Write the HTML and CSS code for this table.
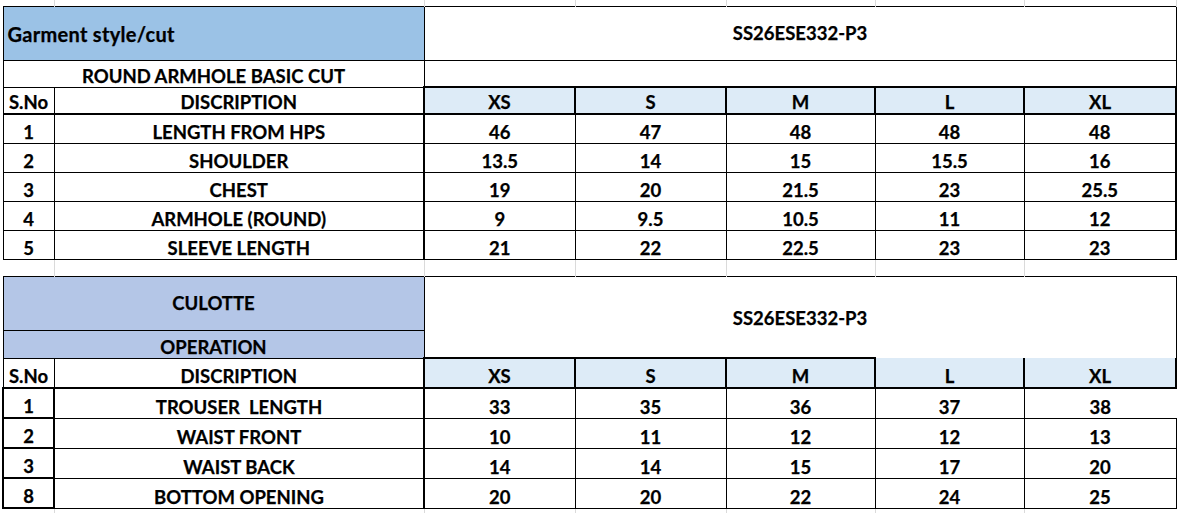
FILE: index.html
```html
<!DOCTYPE html>
<html lang="en">
<head>
<meta charset="utf-8">
<title>Size Spec</title>
<link rel="stylesheet" href="styles.css">
</head>
<body>
<table class="sheet">
  <colgroup>
    <col class="c-sno">
    <col class="c-desc">
    <col class="c-xs">
    <col class="c-s">
    <col class="c-m">
    <col class="c-l">
    <col class="c-xl">
  </colgroup>
  <tbody>
    <tr class="strip top-strip">
      <td></td><td></td><td></td><td></td><td></td><td></td><td></td>
    </tr>

    <tr class="r-big">
      <td colspan="2" class="thin fill-a left mid title">Garment style/cut</td>
      <td colspan="5" class="thin mid">SS26ESE332-P3</td>
    </tr>
    <tr class="r-sub">
      <td colspan="2" class="thin">ROUND ARMHOLE BASIC CUT</td>
      <td colspan="5" class="thin"></td>
    </tr>
    <tr class="r-head">
      <td class="thin hb">S.No</td>
      <td class="thin hb">DISCRIPTION</td>
      <td class="size-h">XS</td>
      <td class="size-h">S</td>
      <td class="size-h">M</td>
      <td class="size-h">L</td>
      <td class="size-h">XL</td>
    </tr>
    <tr class="r-data">
      <td class="thin">1</td><td class="thin desc">LENGTH FROM HPS</td>
      <td class="thin">46</td><td class="thin">47</td><td class="thin">48</td><td class="thin">48</td><td class="thin xl">48</td>
    </tr>
    <tr class="r-data">
      <td class="thin">2</td><td class="thin desc">SHOULDER</td>
      <td class="thin">13.5</td><td class="thin">14</td><td class="thin">15</td><td class="thin">15.5</td><td class="thin xl">16</td>
    </tr>
    <tr class="r-data">
      <td class="thin">3</td><td class="thin desc">CHEST</td>
      <td class="thin">19</td><td class="thin">20</td><td class="thin">21.5</td><td class="thin">23</td><td class="thin xl">25.5</td>
    </tr>
    <tr class="r-data">
      <td class="thin">4</td><td class="thin desc">ARMHOLE (ROUND)</td>
      <td class="thin">9</td><td class="thin">9.5</td><td class="thin">10.5</td><td class="thin">11</td><td class="thin xl">12</td>
    </tr>
    <tr class="r-data">
      <td class="thin">5</td><td class="thin desc">SLEEVE LENGTH</td>
      <td class="thin">21</td><td class="thin">22</td><td class="thin">22.5</td><td class="thin">23</td><td class="thin xl">23</td>
    </tr>

    <tr class="strip gap-strip">
      <td></td><td></td><td></td><td></td><td></td><td></td><td class="last"></td>
    </tr>

    <tr class="r-big">
      <td colspan="2" class="thin fill-b mid">CULOTTE</td>
      <td colspan="5" rowspan="2" class="thin nob mid code2">SS26ESE332-P3</td>
    </tr>
    <tr class="r-op">
      <td colspan="2" class="thin fill-b">OPERATION</td>
    </tr>
    <tr class="r-head2">
      <td class="thin hb">S.No</td>
      <td class="thin hb">DISCRIPTION</td>
      <td class="size-h">XS</td>
      <td class="size-h">S</td>
      <td class="size-h">M</td>
      <td class="size-h notop">L</td>
      <td class="size-h notop">XL</td>
    </tr>
    <tr class="r-data2">
      <td class="sno2">1</td><td class="thin desc">TROUSER&nbsp; LENGTH</td>
      <td class="thin">33</td><td class="thin">35</td><td class="thin">36</td><td class="thin">37</td><td class="thin noright">38</td>
    </tr>
    <tr class="r-data2">
      <td class="sno2">2</td><td class="thin desc">WAIST FRONT</td>
      <td class="thin">10</td><td class="thin">11</td><td class="thin">12</td><td class="thin">12</td><td class="thin">13</td>
    </tr>
    <tr class="r-data2">
      <td class="sno2">3</td><td class="thin desc">WAIST BACK</td>
      <td class="thin">14</td><td class="thin">14</td><td class="thin">15</td><td class="thin">17</td><td class="thin">20</td>
    </tr>
    <tr class="r-data2">
      <td class="sno2">8</td><td class="thin desc">BOTTOM OPENING</td>
      <td class="thin">20</td><td class="thin">20</td><td class="thin">22</td><td class="thin">24</td><td class="thin">25</td>
    </tr>

    <tr class="strip bottom-strip">
      <td></td><td></td><td></td><td></td><td></td><td></td><td class="last"></td>
    </tr>
  </tbody>
</table>
</body>
</html>
```

FILE: styles.css
```css
html, body {
  margin: 0;
  padding: 0;
  background: #ffffff;
}

body {
  padding-left: 2px;
  font-family: "Lato", "Carlito", "Liberation Sans", sans-serif;
  font-weight: 700;
  color: #000000;
}

.sheet {
  border-collapse: collapse;
  table-layout: fixed;
  width: 1173px;
  font-size: 18.5px;
  line-height: 22px;
  -webkit-text-stroke: 0.25px #000000;
}

.c-sno { width: 51px; }
.c-desc { width: 370px; }
.c-xs { width: 151px; }
.c-s { width: 151px; }
.c-m { width: 149px; }
.c-l { width: 149px; }
.c-xl { width: 152px; }

.sheet td {
  padding: 0 2px 0;
  text-align: center;
  vertical-align: bottom;
  white-space: nowrap;
  overflow: hidden;
}

/* spreadsheet gridline strips */
.strip td {
  border-right: 1px solid #dadada;
  padding: 0;
}
.strip td.last {
  border-right: none;
}
.top-strip { height: 6px; }
.gap-strip { height: 17px; }
.bottom-strip { height: 5px; }

/* row heights */
.r-big { height: 54px; }
.r-sub { height: 27px; }
.r-head { height: 27px; }
.r-data { height: 29px; }
.r-op { height: 28px; }
.r-head2 { height: 30px; }
.r-data2 { height: 30px; }

/* borders */
.thin { border: 1px solid #000000; }
.hb { border-bottom: 2px solid #000000; }
.desc { border-right: 2px solid #000000; }
.xl { border-right: 2px solid #000000; }
.nob { border-bottom: none; }
.noright { border-right: none; }

.size-h {
  background: #ddebf7;
  border: 2px solid #000000;
}
.size-h.notop { border-top: none; }

.sno2 {
  border: 2px solid #000000;
}

/* fills */
.fill-a { background: #9bc2e6; }
.fill-b { background: #b4c6e7; }

.sheet td.left {
  text-align: left;
  padding-left: 4px;
}
.sheet td.title {
  font-size: 20px;
  letter-spacing: 0.3px;
  padding-top: 2px;
}
.sheet td.mid { vertical-align: middle; }
.sheet td.code2 { padding-top: 2px; }
```
